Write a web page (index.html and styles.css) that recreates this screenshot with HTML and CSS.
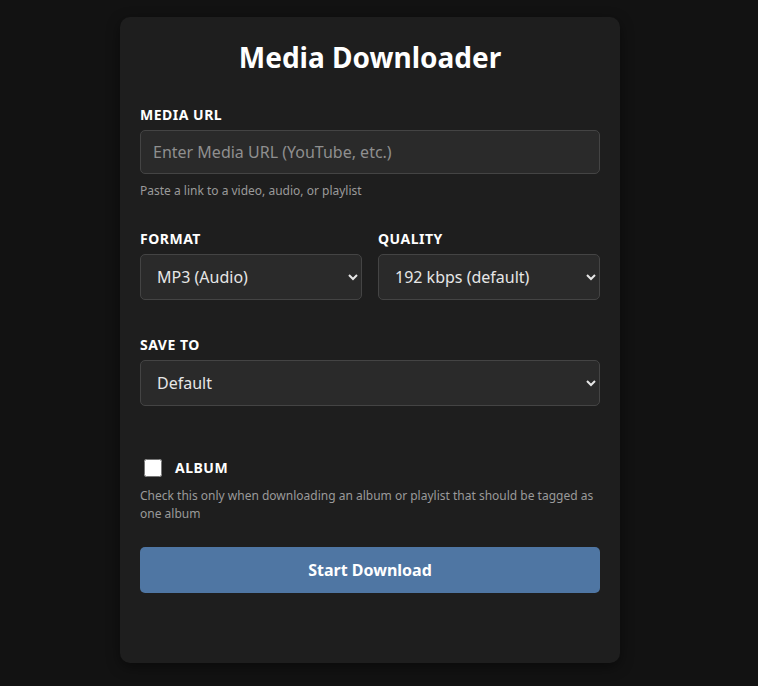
FILE: index.html
```html
<!DOCTYPE html>
<html lang="en">
<head>
<meta charset="utf-8">
<title>Media Downloader</title>
<link rel="stylesheet" href="styles.css">
</head>
<body>
<main class="card">
  <h1 class="title">Media Downloader</h1>

  <div class="field field-url">
    <label class="label" for="url">Media URL</label>
    <input class="input" id="url" type="text" placeholder="Enter Media URL (YouTube, etc.)">
    <p class="hint">Paste a link to a video, audio, or playlist</p>
  </div>

  <div class="row">
    <div class="field">
      <label class="label" for="format">Format</label>
      <select class="select" id="format">
        <option>MP3 (Audio)</option>
      </select>
    </div>
    <div class="field">
      <label class="label" for="quality">Quality</label>
      <select class="select" id="quality">
        <option>192 kbps (default)</option>
      </select>
    </div>
  </div>

  <div class="field field-save">
    <label class="label" for="save">Save to</label>
    <select class="select" id="save">
      <option>Default</option>
    </select>
  </div>

  <div class="check-block">
    <div class="check-row">
      <input class="checkbox" id="album" type="checkbox">
      <label class="label check-label" for="album">Album</label>
    </div>
    <p class="hint hint-album">Check this only when downloading an album or playlist that should be tagged as one album</p>
  </div>

  <button class="button" type="button">Start Download</button>
</main>
</body>
</html>
```

FILE: styles.css
```css
* {
  box-sizing: border-box;
}

html, body {
  margin: 0;
  padding: 0;
  background: #121212;
}

body {
  font-family: "Noto Sans", "Open Sans", sans-serif;
  color: #ffffff;
  padding: 17px 18px 24px 0;
}

.card {
  width: 500px;
  margin: 0 auto;
  background: #1e1e1e;
  border-radius: 10px;
  box-shadow: 0 4px 14px rgba(0, 0, 0, 0.45);
  padding: 20px 20px 70px;
}

.title {
  margin: 0 0 27px;
  text-align: center;
  font-size: 28px;
  line-height: 41px;
  font-weight: 700;
  color: #ffffff;
}

.field {
  display: flex;
  flex-direction: column;
  min-width: 0;
}

.label {
  display: block;
  font-size: 14px;
  line-height: 19px;
  font-weight: 700;
  text-transform: uppercase;
  letter-spacing: 0.5px;
  color: #ffffff;
  margin-bottom: 6px;
}

.input {
  width: 100%;
  height: 44px;
  padding: 0 12px;
  background: #2a2a2a;
  border: 1px solid #444444;
  border-radius: 5px;
  color: #e0e0e0;
  font-family: inherit;
  font-size: 16px;
  outline: none;
}

.input::placeholder {
  color: #8f8f8f;
}

.hint {
  margin: 8px 0 0;
  font-size: 12px;
  line-height: 18px;
  color: #9a9a9a;
}

.row {
  display: grid;
  grid-template-columns: 1fr 1fr;
  gap: 16px;
  margin-top: 29px;
}

.select {
  width: 100%;
  height: 46px;
  padding: 0 12px;
  background-color: #2a2a2a;
  border: 1px solid #444444;
  border-radius: 5px;
  color: #e6e6e6;
  font-family: inherit;
  font-size: 16px;
  outline: none;
}

.field-save {
  margin-top: 35px;
}

.check-block {
  margin-top: 52px;
}

.check-row {
  display: flex;
  align-items: center;
  gap: 10px;
}

.checkbox {
  width: 18px;
  height: 18px;
  margin: 0 3px 0 4px;
}

.check-label {
  margin: 0;
}

.hint-album {
  margin-top: 10px;
}

.button {
  display: block;
  width: 100%;
  height: 46px;
  margin-top: 24px;
  background: #4f76a3;
  border: none;
  border-radius: 5px;
  color: #ffffff;
  font-family: inherit;
  font-size: 16px;
  font-weight: 700;
  cursor: pointer;
}
```
